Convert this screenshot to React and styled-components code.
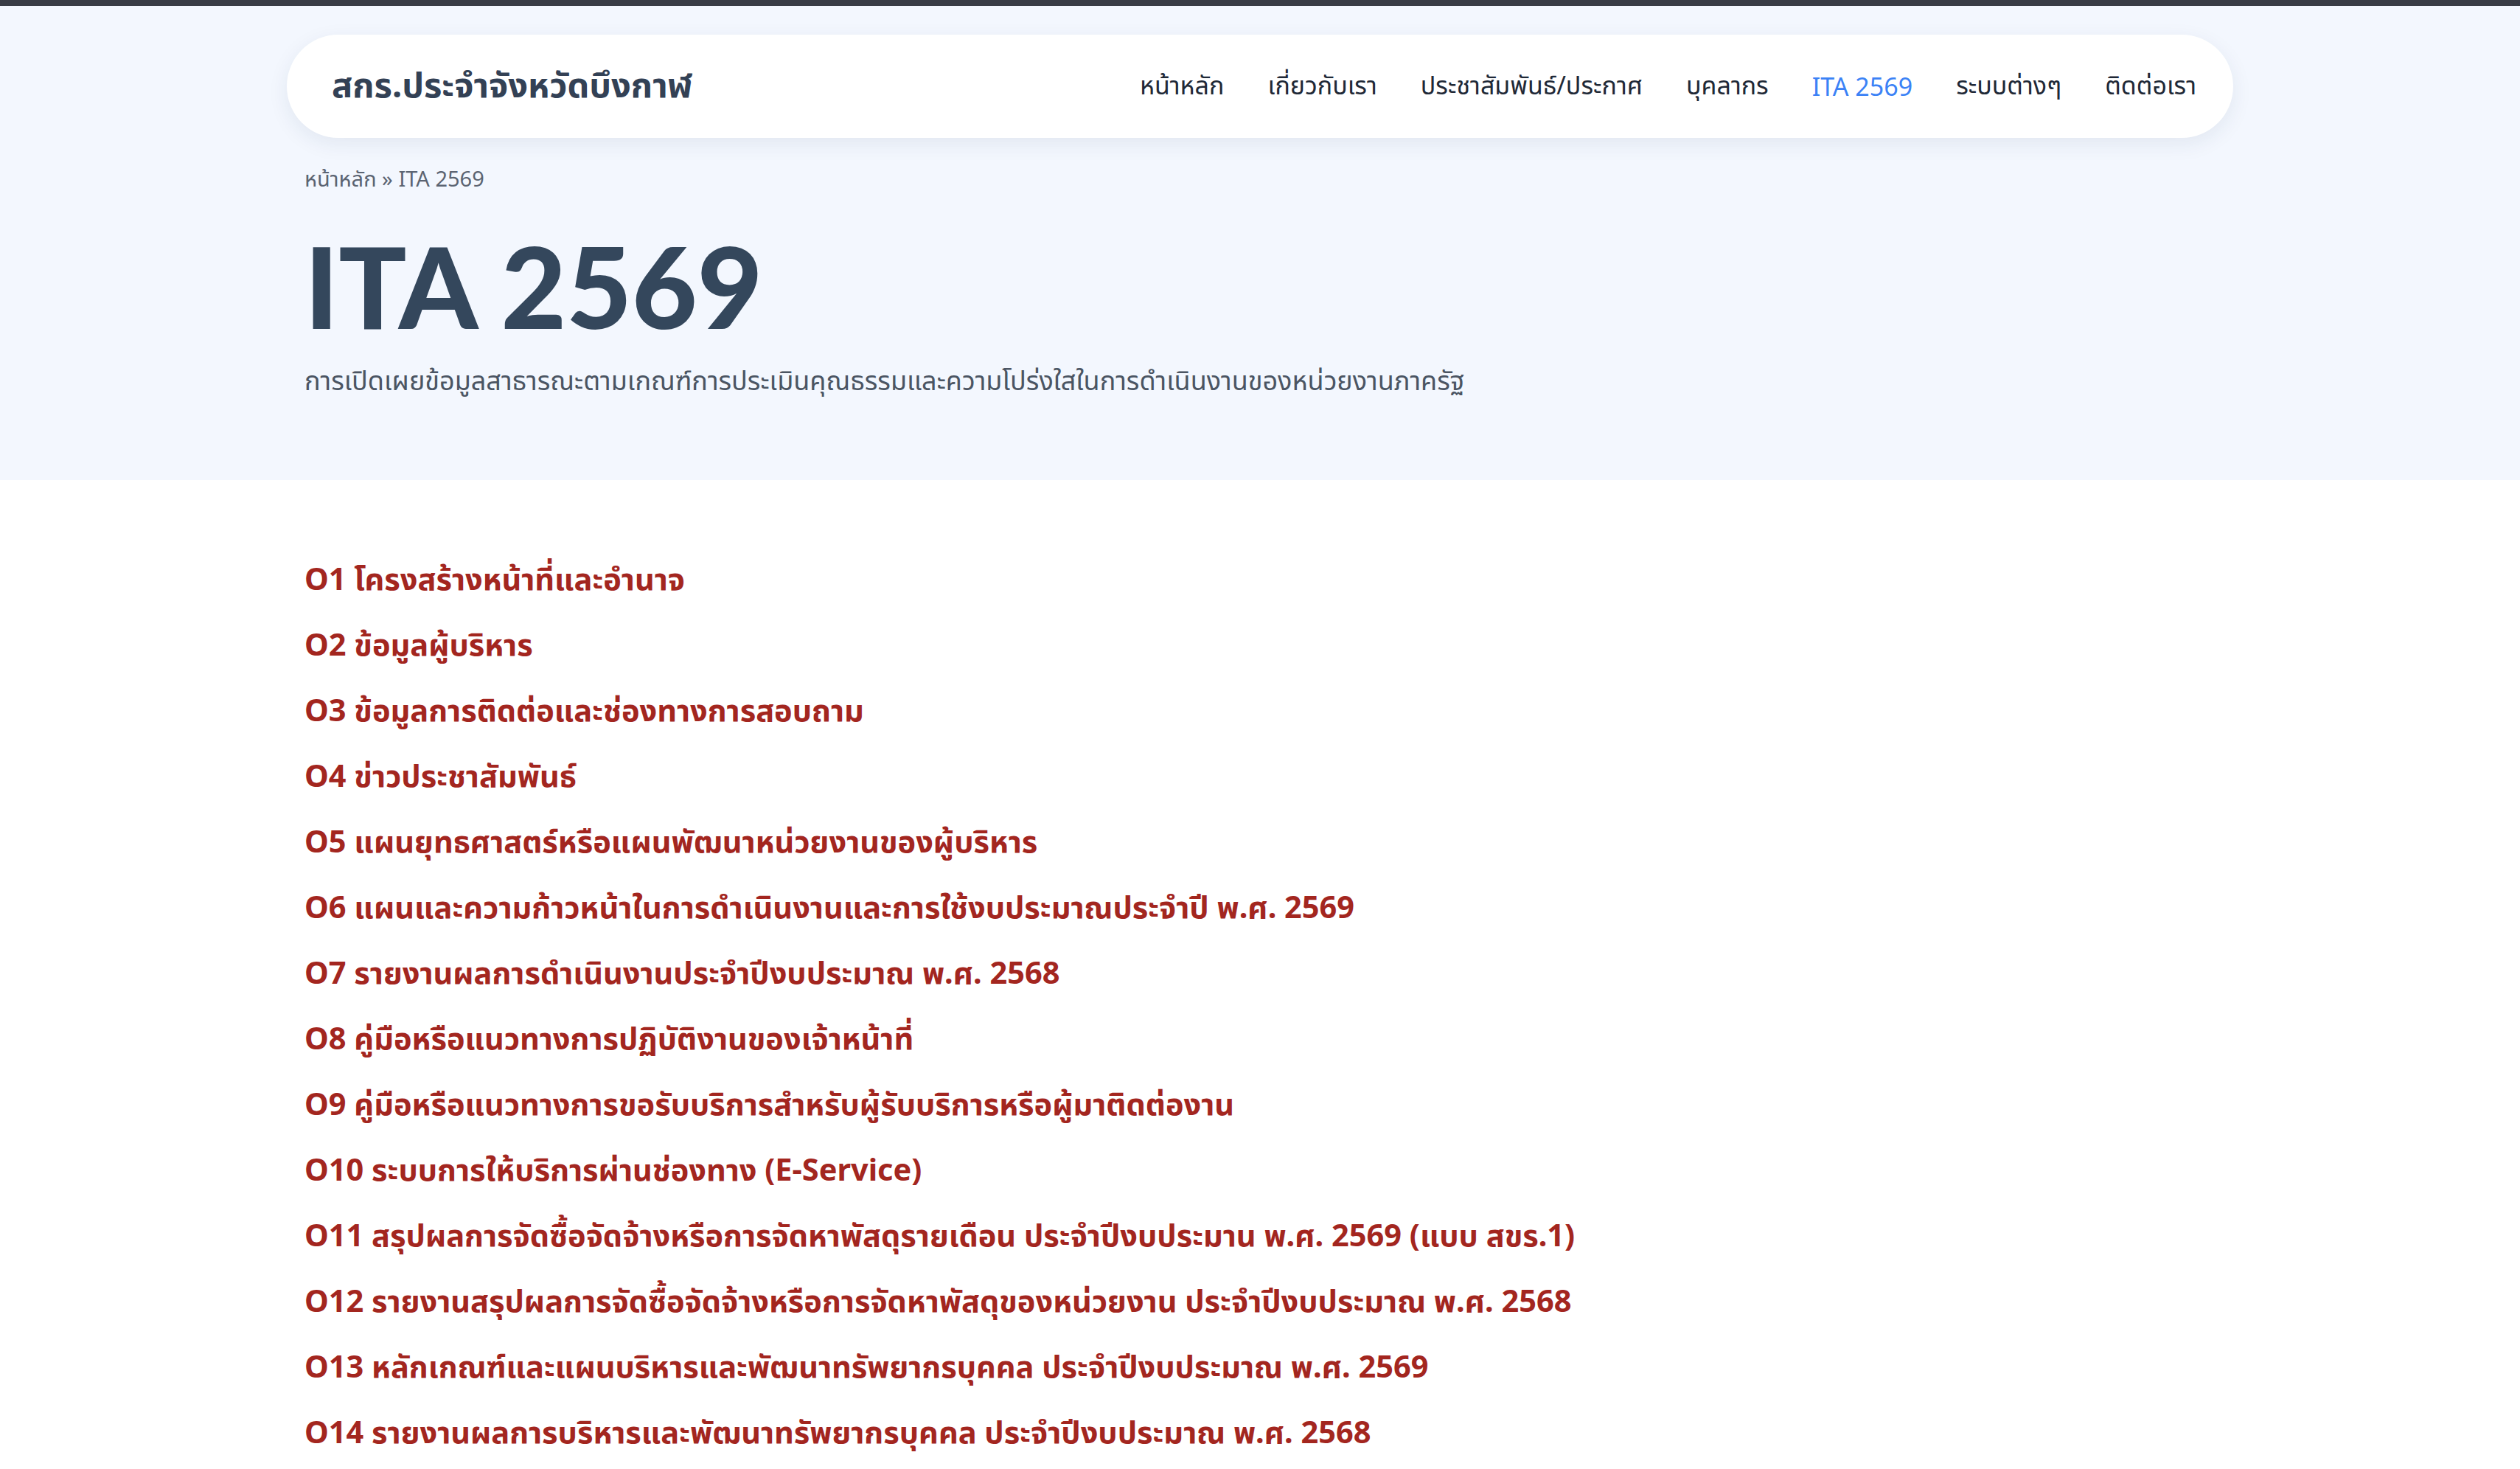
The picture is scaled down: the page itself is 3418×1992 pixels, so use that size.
import React from "react";
import styled, { createGlobalStyle } from "styled-components";

const GlobalStyle = createGlobalStyle`
  * {
    box-sizing: border-box;
  }
  body {
    margin: 0;
    background: #ffffff;
    font-family: "Noto Sans", "Noto Sans Thai", Lato, sans-serif;
  }
`;

const Page = styled.div`
  min-height: 100vh;
  border-top: 8px solid #393c45;
`;

const Hero = styled.section`
  background: #f3f7fe;
  padding: 39px 0 108px;
`;

const Container = styled.div`
  width: 2640px;
  margin: 0 auto;
`;

const Header = styled.header`
  height: 140px;
  display: flex;
  align-items: center;
  justify-content: space-between;
  padding: 0 50px 0 61px;
  background: #ffffff;
  border-radius: 70px;
  box-shadow: 0 8px 28px rgba(30, 50, 90, 0.08);
`;

const Brand = styled.a`
  font-size: 47px;
  font-weight: 700;
  color: #334155;
  text-decoration: none;
`;

const Nav = styled.nav`
  display: flex;
  align-items: center;
  gap: 59px;
`;

const NavLink = styled.a`
  font-size: 34px;
  color: ${(p) => (p.$active ? "#3b82f6" : "#1f2937")};
  text-decoration: none;
`;

const Inner = styled.div`
  padding: 0 24px;
`;

const Breadcrumb = styled.div`
  margin-top: 34px;
  font-size: 29px;
  line-height: 42px;
  color: #5b6472;
`;

const Title = styled.h1`
  margin: 40px 0 0;
  font-family: Lato, "Noto Sans", sans-serif;
  font-size: 153px;
  font-weight: 900;
  line-height: 1.1;
  color: #34475c;
`;

const Subtitle = styled.p`
  margin: 18px 0 0;
  font-size: 36px;
  line-height: 1.5;
  color: #4b5563;
`;

const List = styled.ul`
  list-style: none;
  margin: 0;
  padding: 92px 24px 40px;
`;

const Item = styled.li`
  height: 89px;
  display: flex;
  align-items: center;
`;

const ItemLink = styled.a`
  font-size: 41.5px;
  font-weight: 700;
  color: #a3261f;
  text-decoration: none;
`;

const navItems = [
  "หน้าหลัก",
  "เกี่ยวกับเรา",
  "ประชาสัมพันธ์/ประกาศ",
  "บุคลากร",
  "ITA 2569",
  "ระบบต่างๆ",
  "ติดต่อเรา",
];

const indicators = [
  "O1 โครงสร้างหน้าที่และอำนาจ",
  "O2 ข้อมูลผู้บริหาร",
  "O3 ข้อมูลการติดต่อและช่องทางการสอบถาม",
  "O4 ข่าวประชาสัมพันธ์",
  "O5 แผนยุทธศาสตร์หรือแผนพัฒนาหน่วยงานของผู้บริหาร",
  "O6 แผนและความก้าวหน้าในการดำเนินงานและการใช้งบประมาณประจำปี พ.ศ. 2569",
  "O7 รายงานผลการดำเนินงานประจำปีงบประมาณ พ.ศ. 2568",
  "O8 คู่มือหรือแนวทางการปฏิบัติงานของเจ้าหน้าที่",
  "O9 คู่มือหรือแนวทางการขอรับบริการสำหรับผู้รับบริการหรือผู้มาติดต่องาน",
  "O10 ระบบการให้บริการผ่านช่องทาง (E-Service)",
  "O11 สรุปผลการจัดซื้อจัดจ้างหรือการจัดหาพัสดุรายเดือน ประจำปีงบประมาน พ.ศ. 2569 (แบบ สขร.1)",
  "O12 รายงานสรุปผลการจัดซื้อจัดจ้างหรือการจัดหาพัสดุของหน่วยงาน ประจำปีงบประมาณ พ.ศ. 2568",
  "O13 หลักเกณฑ์และแผนบริหารและพัฒนาทรัพยากรบุคคล ประจำปีงบประมาณ พ.ศ. 2569",
  "O14 รายงานผลการบริหารและพัฒนาทรัพยากรบุคคล ประจำปีงบประมาณ พ.ศ. 2568",
];

export default function App() {
  return (
    <Page>
      <GlobalStyle />
      <Hero>
        <Container>
          <Header>
            <Brand href="#">สกร.ประจำจังหวัดบึงกาฬ</Brand>
            <Nav>
              {navItems.map((label) => (
                <NavLink key={label} href="#" $active={label === "ITA 2569"}>
                  {label}
                </NavLink>
              ))}
            </Nav>
          </Header>
          <Inner>
            <Breadcrumb>หน้าหลัก » ITA 2569</Breadcrumb>
            <Title>ITA 2569</Title>
            <Subtitle>
              การเปิดเผยข้อมูลสาธารณะตามเกณฑ์การประเมินคุณธรรมและความโปร่งใสในการดำเนินงานของหน่วยงานภาครัฐ
            </Subtitle>
          </Inner>
        </Container>
      </Hero>
      <Container>
        <List>
          {indicators.map((text) => (
            <Item key={text}>
              <ItemLink href="#">{text}</ItemLink>
            </Item>
          ))}
        </List>
      </Container>
    </Page>
  );
}
